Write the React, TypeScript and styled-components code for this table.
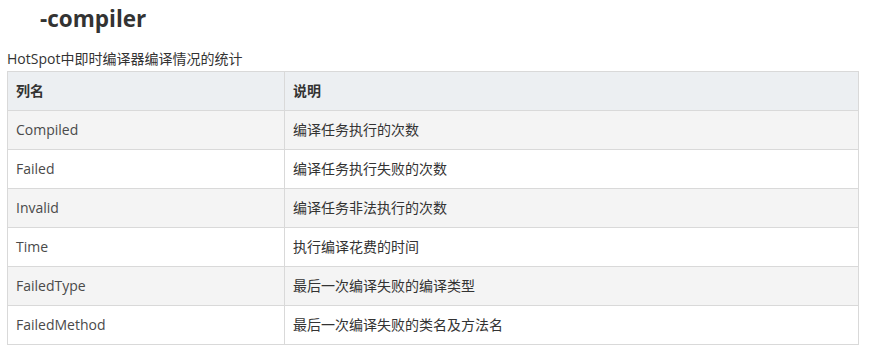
import React from "react";
import styled, { createGlobalStyle } from "styled-components";

const Global = createGlobalStyle`
  html, body { margin: 0; padding: 0; background: #fff; }
  body { font-family: "Open Sans", "Noto Sans CJK SC", sans-serif; color: #333; }
`;

const Page = styled.div`
  padding: 0 19px 0 7px;
  display: flex;
  flex-direction: column;
`;

const Heading = styled.h3`
  margin: 0;
  padding: 4px 0 0 33px;
  height: 44px;
  box-sizing: border-box;
  font-family: "Open Sans", sans-serif;
  font-size: 22.5px;
  font-weight: 700;
  line-height: 30px;
  color: #333;
`;

const Caption = styled.p`
  margin: 0;
  height: 27px;
  font-size: 14px;
  line-height: 30px;
  color: #333;
  font-family: "Open Sans", "Noto Sans CJK SC", sans-serif;
`;

const Table = styled.table`
  width: 852px;
  border-collapse: collapse;
  border: 1px solid #d9d9d9;
  table-layout: fixed;
`;

const HeadCell = styled.th<{ $w?: number }>`
  width: ${(p) => (p.$w ? `${p.$w}px` : "auto")};
  height: 39px;
  padding: 0 8px;
  box-sizing: border-box;
  border: 1px solid #d9d9d9;
  background: #eceff2;
  text-align: left;
  font-size: 14px;
  font-weight: 700;
  color: #333;
  line-height: 20px;
`;

const Row = styled.tr<{ $shaded: boolean }>`
  background: ${(p) => (p.$shaded ? "#f4f4f4" : "#fff")};
`;

const Cell = styled.td<{ $muted?: boolean }>`
  height: 39px;
  padding: 0 8px;
  box-sizing: border-box;
  border: 1px solid #d9d9d9;
  font-size: 14px;
  line-height: 20px;
  color: ${(p) => (p.$muted ? "#4a4a4a" : "#333")};
`;

const rows: [string, string][] = [
  ["Compiled", "编译任务执行的次数"],
  ["Failed", "编译任务执行失败的次数"],
  ["Invalid", "编译任务非法执行的次数"],
  ["Time", "执行编译花费的时间"],
  ["FailedType", "最后一次编译失败的编译类型"],
  ["FailedMethod", "最后一次编译失败的类名及方法名"],
];

export default function App() {
  return (
    <Page>
      <Global />
      <Heading>-compiler</Heading>
      <Caption>HotSpot中即时编译器编译情况的统计</Caption>
      <Table>
        <thead>
          <tr>
            <HeadCell $w={277}>列名</HeadCell>
            <HeadCell>说明</HeadCell>
          </tr>
        </thead>
        <tbody>
          {rows.map(([name, desc], i) => (
            <Row key={name} $shaded={i % 2 === 0}>
              <Cell $muted>{name}</Cell>
              <Cell>{desc}</Cell>
            </Row>
          ))}
        </tbody>
      </Table>
    </Page>
  );
}
